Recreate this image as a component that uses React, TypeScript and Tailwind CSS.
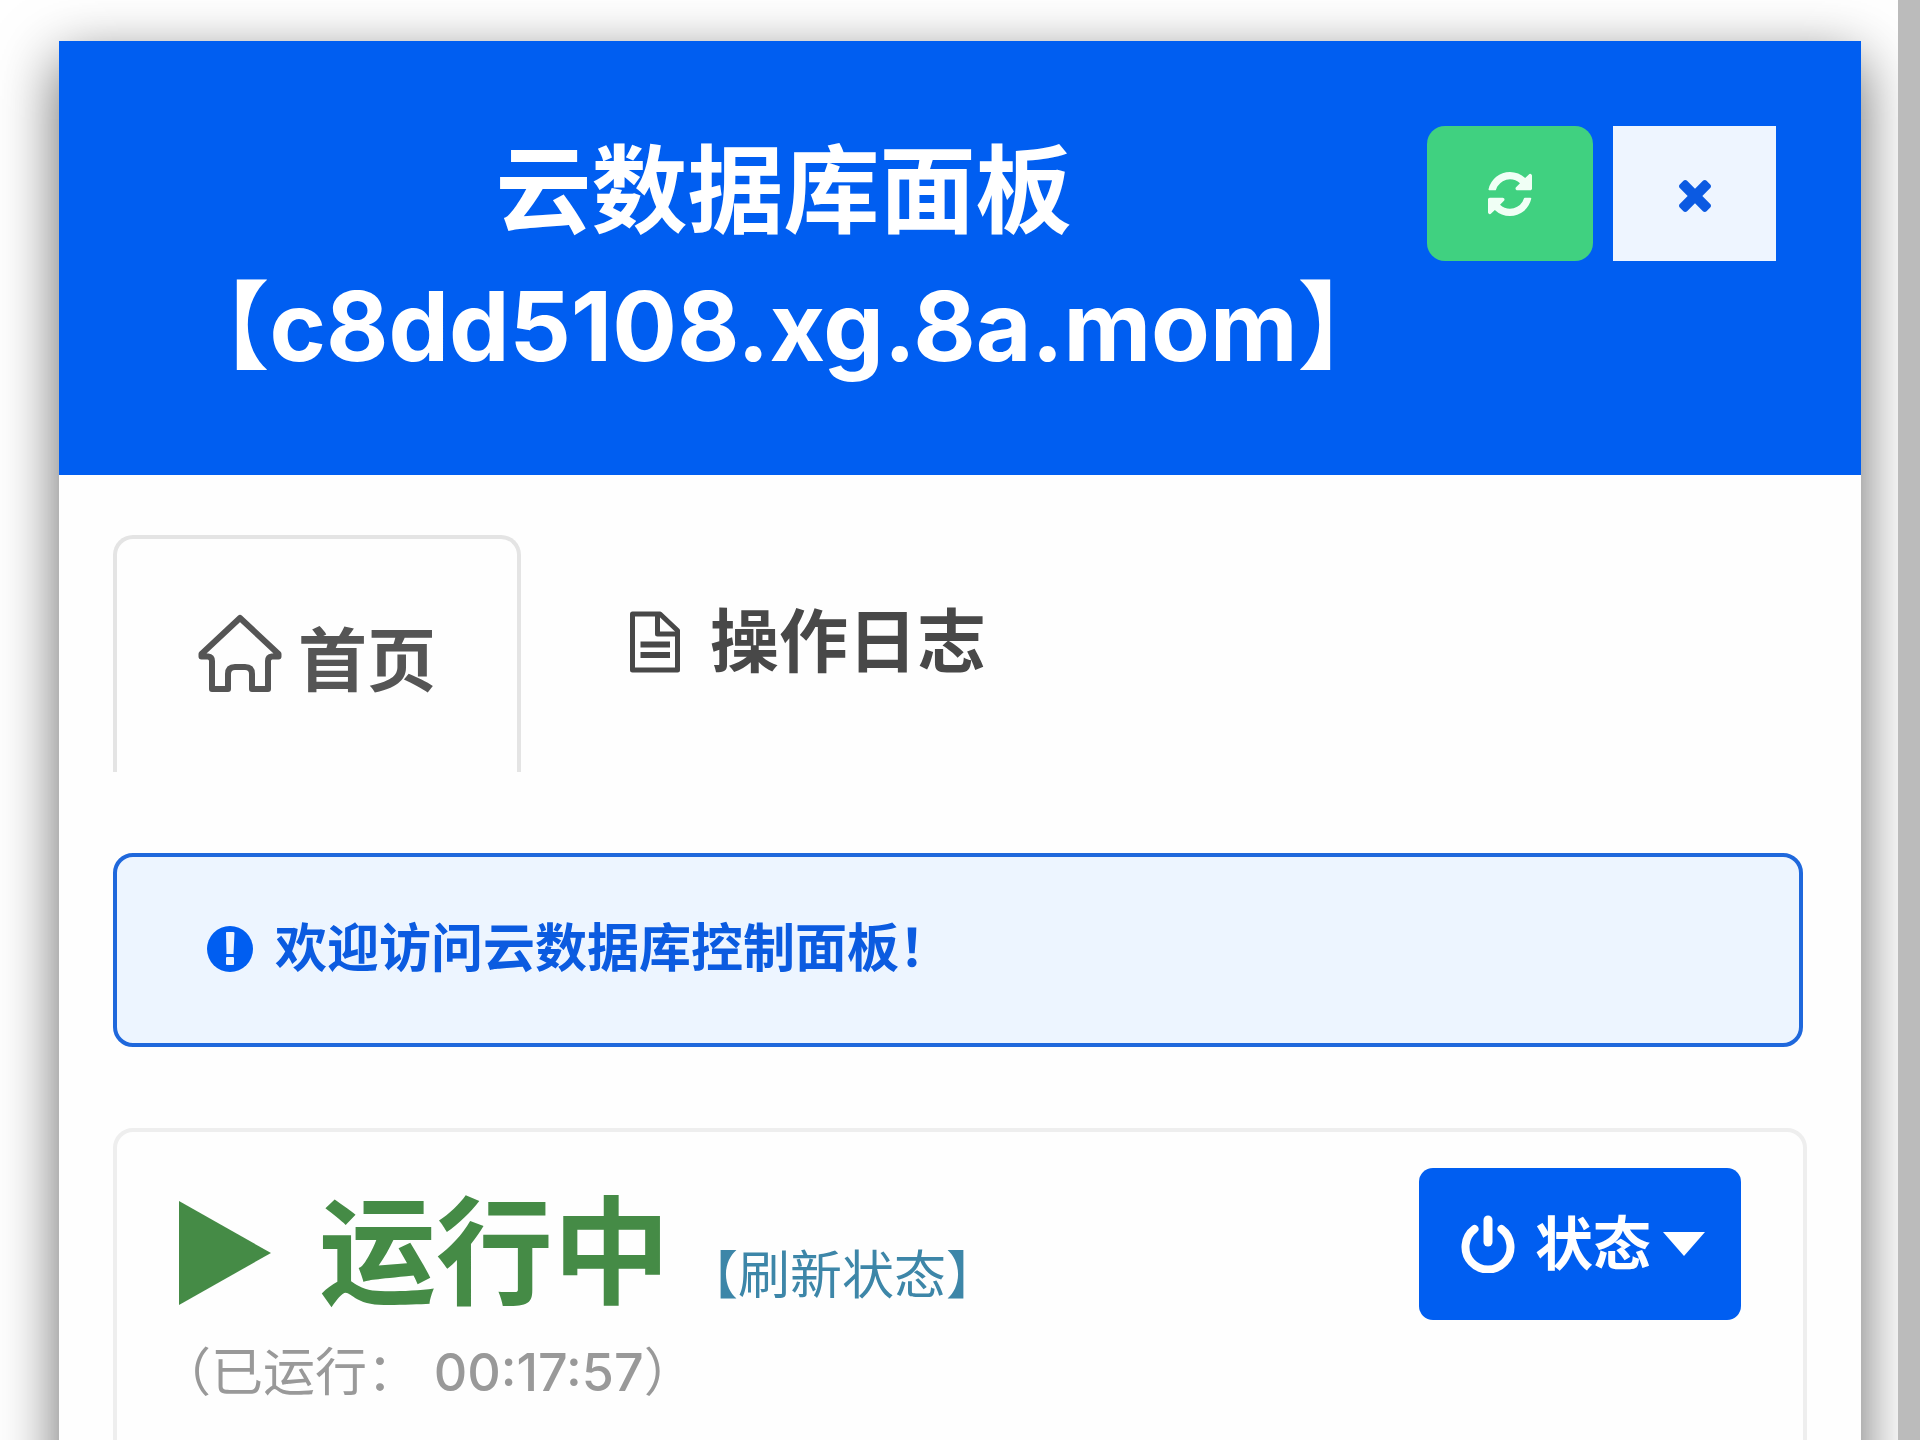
import { useState } from 'react';

function RefreshIcon() {
    return (
        <svg viewBox="0 0 1536 1536" fill="currentColor" className="w-11 h-11" aria-hidden="true">
            <path d="M1511 928q0 5-1 7-64 268-268 434.5t-478 166.5q-146 0-282.5-55t-243.5-157l-129 129q-19 19-45 19t-45-19-19-45v-448q0-26 19-45t45-19h448q26 0 45 19t19 45-19 45l-137 137q71 66 161 102t187 36q134 0 250-65t186-179q11-17 53-117 8-23 30-23h192q13 0 22.5 9.5t9.5 22.5zm25-800v448q0 26-19 45t-45 19h-448q-26 0-45-19t-19-45 19-45l138-138q-148-137-349-137-134 0-250 65t-186 179q-11 17-53 117-8 23-30 23h-199q-13 0-22.5-9.5t-9.5-22.5v-7q65-268 270-434.5t480-166.5q146 0 284 55.5t245 156.5l130-129q19-19 45-19t45 19 19 45z" />
        </svg>
    );
}

function CloseIcon() {
    return (
        <svg viewBox="110 366 1188 1188" fill="currentColor" className="w-8 h-8" aria-hidden="true">
            <path d="M1298 1322q0 40-28 68l-136 136q-28 28-68 28t-68-28l-294-294-294 294q-28 28-68 28t-68-28l-136-136q-28-28-28-68t28-68l294-294-294-294q-28-28-28-68t28-68l136-136q28-28 68-28t68 28l294 294 294-294q28-28 68-28t68 28l136 136q28 28 28 68t-28 68l-294 294 294 294q28 28 28 68z" />
        </svg>
    );
}

function HomeIcon() {
    return (
        <svg viewBox="0 0 84 82" fill="none" stroke="currentColor" strokeWidth="6" strokeLinejoin="round" strokeLinecap="round" className="w-[84px] h-[82px]" aria-hidden="true">
            <path d="M42 4 L3.500 40 V42.500 H10 Q14 43 14 47 V75 H30 V60 Q30 53 37 53 H47 Q54 53 54 60 V75 H70 V47 Q70 43 74 42.500 H80.500 V40 Z" />
        </svg>
    );
}

function FileIcon() {
    return (
        <svg viewBox="0 0 50 62" fill="none" stroke="currentColor" strokeWidth="5" strokeLinejoin="round" className="w-[50px] h-[62px]" aria-hidden="true">
            <path d="M2.5 3 H30 L47.5 19.5 V59 H2.5 Z" />
            <path d="M27.5 3 V23 H47.5" />
            <path d="M10.5 33.5 H40 M10.5 44 H40" strokeWidth="6" />
        </svg>
    );
}

function NoticeIcon() {
    return (
        <svg viewBox="0 0 46 46" className="w-[46px] h-[46px]" aria-hidden="true">
            <circle cx="23" cy="23" r="23" fill="#005ef1" />
            <path d="M19 7 Q18.5 6 20 6 H26 Q27.5 6 27.500 7 L26.500 28 H19.500 Z" fill="#edf5ff" />
            <rect x="19" y="31" width="8" height="8" rx="1" fill="#edf5ff" />
        </svg>
    );
}

function PowerIcon() {
    return (
        <svg viewBox="0 0 54 58" fill="none" stroke="currentColor" strokeWidth="8" strokeLinecap="round" className="w-[54px] h-[58px]" aria-hidden="true">
            <path d="M13.500 14 A22.500 22.500 0 1 0 40.500 14" />
            <path d="M27 5 V27" strokeWidth="9" />
        </svg>
    );
}

export default function App() {
    const [tab, setTab] = useState<'home' | 'logs'>('home');

    return (
        <div className="flex h-screen overflow-hidden bg-white font-['Inter','Noto_Sans_CJK_SC',sans-serif]">
            <div className="flex-1 min-w-0 overflow-hidden pt-[41px] pl-[59px] pr-[37px]">
                <div className="min-h-full bg-[#fefefe] shadow-[0_19px_56px_rgba(0,0,0,0.6)]">
                    {/* Header */}
                    <header className="flex items-start gap-1 bg-[#005ef1] px-[85px] py-[81px]">
                        <h1 className="flex-1 text-center text-[96px] leading-[136px] font-bold text-white">
                            云数据库面板
                            <br />
                            <span className="whitespace-nowrap">【c8dd5108.xg.8a.mom】</span>
                        </h1>
                        <div className="flex gap-5 mt-1">
                            <button aria-label="刷新" className="flex items-center justify-center w-[166px] h-[135px] rounded-[18px] bg-[#40d180] text-[#f0fff5]">
                                <RefreshIcon />
                            </button>
                            <button aria-label="关闭" className="flex items-center justify-center w-[163px] h-[135px] pt-1 bg-[#eef5ff] text-[#0b5ae2]">
                                <CloseIcon />
                            </button>
                        </div>
                    </header>

                    <main className="flex flex-col gap-[81px] px-[54px] pt-[60px]">
                        {/* Tabs */}
                        <nav className="flex items-start text-[69px] leading-[70px] font-bold text-[#484848]">
                            <button
                                onClick={() => setTab('home')}
                                aria-current={tab === 'home'}
                                className="flex items-end gap-4 h-[237px] pt-[75px] pb-[76px] px-[81px] border-4 border-b-0 border-[#e4e4e4] rounded-t-[20px] text-[#555555]"
                            >
                                <HomeIcon />
                                首页
                            </button>
                            <button onClick={() => setTab('logs')} aria-current={tab === 'logs'} className="flex items-center gap-[30px] pt-[72px] pl-[109px]">
                                <FileIcon />
                                操作日志
                            </button>
                        </nav>

                        <div className="flex items-center gap-[22px] mr-1 pt-[65px] pb-[67px] px-[90px] border-4 border-[#1f68dc] rounded-[20px] bg-[#edf5ff] text-[52px] leading-[54px] font-bold text-[#0b5be0]">
                            <NoticeIcon />
                            欢迎访问云数据库控制面板！
                        </div>

                        {/* Status panel */}
                        <section className="flex items-start justify-between h-[400px] border-4 border-[#eeeeee] rounded-[20px] pt-9 pl-[42px] pr-[62px]">
                            <div className="pt-[26px]">
                                <div className="flex items-end">
                                    <svg viewBox="0 0 92 104" fill="#458b46" className="w-[92px] h-[104px] ml-5 mr-12 self-center" aria-hidden="true">
                                        <path d="M0 0 L92 52 L0 104 Z" />
                                    </svg>
                                    <strong className="text-[117px] leading-[117px] font-bold text-[#458b46]">运行中</strong>
                                    <a href="#" className="ml-4 text-[52px] leading-[70px] text-[#3d86a8]">【刷新状态】</a>
                                </div>
                                <p className="mt-9 text-[52px] leading-[52px] text-[#999999]">
                                    （已运行： <span className="font-medium">00:17:57</span>）
                                </p>
                            </div>
                            <button className="flex items-center h-[152px] pl-[42px] pr-9 rounded-[14px] bg-[#005ef1] text-[58px] leading-[58px] font-bold text-white">
                                <PowerIcon />
                                <span className="ml-5 mr-3">状态</span>
                                <svg viewBox="0 0 42 24" fill="currentColor" className="w-[42px] h-6" aria-hidden="true">
                                    <path d="M0 0 H42 L21 24 Z" />
                                </svg>
                            </button>
                        </section>
                    </main>
                </div>
            </div>
            {/* Scrollbar track */}
            <div className="relative w-[22px] bg-[#bbbbbb]" />
        </div>
    );
}
